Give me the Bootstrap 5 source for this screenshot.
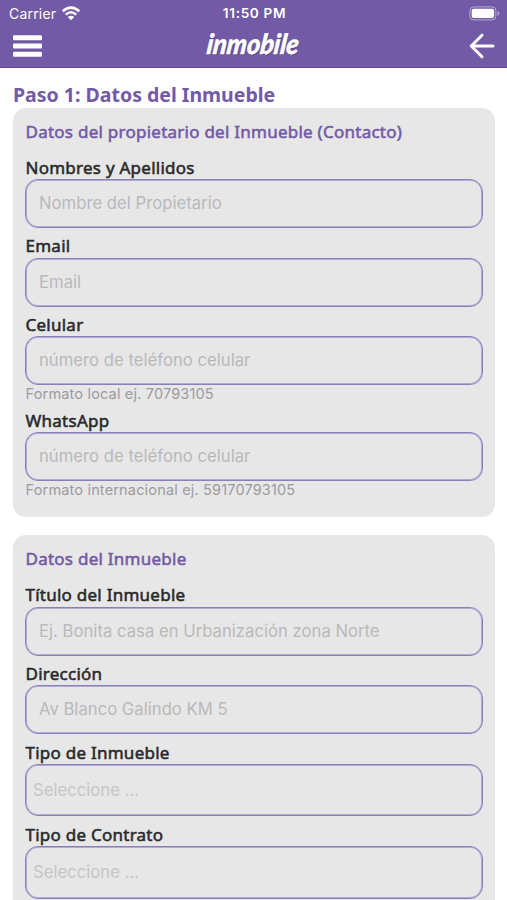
<!DOCTYPE html>
<html lang="es">
<head>
<meta charset="utf-8">
<meta name="viewport" content="width=device-width, initial-scale=1">
<title>Inmobile</title>
<link href="https://cdn.jsdelivr.net/npm/bootstrap@5.3.0/dist/css/bootstrap.min.css" rel="stylesheet">
<style>
:root { --brand: #735aa6; --panel: #e7e7e7; }
html, body { height: 900px; overflow: hidden; }
body { background: #fff; font-family: "Noto Sans", sans-serif; color: #2a2a2a; }
.app-header { height: 68px; background: var(--brand); border-bottom: 1px solid #65499a; }
.status-bar { height: 27px; padding: 0 7px 0 9px; font: 400 14px/27px Inter, sans-serif; }
.status-bar > div { flex: 1 1 0; }
.clock { font-weight: 600; font-size: 13.6px; letter-spacing: .65px; }
.carrier { letter-spacing: .2px; margin-right: 1px; }
.tool-row { height: 38px; padding: 0 12px 0 13px; }
.logo text { font: italic 900 28px Lato, sans-serif; }
.step-title { font-size: 19.5px; font-weight: 700; line-height: 27px; color: var(--brand); padding: 13px 13px 0; margin-bottom: -.5px; }
.panel { background: var(--panel); border-radius: 13px; margin: 0 12.5px 18.5px 13px; padding: 9px 12px 0; }
.panel-first { height: 409px; }
.panel-title, .field-label { font-size: 17px; font-weight: 400; letter-spacing: .25px; -webkit-text-stroke: .55px currentColor; padding-left: .5px; }
.panel-title { line-height: 30px; height: 33px; color: var(--brand); margin: 0; }
.field-label { display: block; line-height: 25px; height: 29.6px; padding-top: 5.4px; white-space: nowrap; }
.field-input.form-control { height: 49px; border: 1px solid #8b7fbb; box-shadow: inset 0 0 0 1px #b3abd0; border-radius: 13px; background: transparent; padding: 0 13px 1px; font: 400 16.7px Inter, sans-serif; }
.field-input.form-control::placeholder { color: #b9b9bb; opacity: 1; }
.field-input.field-pick { height: 52.6px; padding: 0 7px; }
.field-input.field-pick::placeholder { color: #c5c5c8; }
.field-hint { font: 400 14.5px/18px Inter, sans-serif; letter-spacing: .17px; height: 17.5px; color: #9c9c9c; padding-left: .5px; }
</style>
</head>
<body>
<header class="app-header text-white">
  <div class="status-bar d-flex align-items-center">
    <div class="d-flex align-items-center gap-1">
      <span class="carrier">Carrier</span>
      <svg width="20" height="15" viewBox="0 0 20 15" fill="none" stroke="#fff" stroke-width="2.5"><path d="M1.7 5.3Q10-2 18.3 5.3M4.8 8.6Q10 4 15.2 8.6"/><path d="M6.8 11Q10 8.4 13.2 11L10 14.3Z" fill="#fff" stroke="none"/></svg>
    </div>
    <div class="clock text-center">11:50 PM</div>
    <div class="d-flex justify-content-end">
      <svg width="31" height="15" viewBox="0 0 31 15"><rect x=".9" y=".9" width="26" height="13" rx="3.8" fill="none" stroke="#b9add4" stroke-width="1"/><rect x="2.7" y="2.7" width="22.4" height="9.4" rx="2" fill="#fff"/><path d="M28.6 5Q30.3 5.7 30.3 7.4T28.6 9.8Z" fill="#b9add4"/></svg>
    </div>
  </div>
  <div class="tool-row d-flex align-items-center justify-content-between">
    <svg width="29" height="22" viewBox="0 0 29 22" fill="#fff"><rect y=".3" width="29" height="5" rx="1.3"/><rect y="8.5" width="29" height="5" rx="1.3"/><rect y="16.7" width="29" height="5" rx="1.3"/></svg>
    <svg class="logo" width="112" height="38" viewBox="0 0 112 38"><g transform="translate(6 26.5) skewX(-7)"><text x="1" y="1.2" textLength="92" lengthAdjust="spacingAndGlyphs" fill="#4d3a77" opacity=".8">inmobile</text><text textLength="92" lengthAdjust="spacingAndGlyphs" fill="#fff" stroke="#fff" stroke-width=".5">inmobile</text></g></svg>
    <svg width="26" height="26" viewBox="0 0 26 26" fill="none" stroke="#fff" stroke-width="3" stroke-linecap="round" stroke-linejoin="round"><path d="M24 13H2.5M13 2.2L2.2 13L13 23.8"/></svg>
  </div>
</header>
<main>
  <h1 class="step-title">Paso 1: Datos del Inmueble</h1>
  <section class="panel panel-first">
    <h2 class="panel-title">Datos del propietario del Inmueble (Contacto)</h2>
    <label class="field-label" for="nombre">Nombres y Apellidos</label>
    <input id="nombre" class="form-control field-input" placeholder="Nombre del Propietario">
    <label class="field-label" for="email">Email</label>
    <input id="email" class="form-control field-input" placeholder="Email">
    <label class="field-label" for="celular">Celular</label>
    <input id="celular" class="form-control field-input" placeholder="número de teléfono celular">
    <div class="field-hint">Formato local ej. 70793105</div>
    <label class="field-label" for="whatsapp">WhatsApp</label>
    <input id="whatsapp" class="form-control field-input" placeholder="número de teléfono celular">
    <div class="field-hint">Formato internacional ej. 59170793105</div>
  </section>
  <section class="panel">
    <h2 class="panel-title">Datos del Inmueble</h2>
    <label class="field-label" for="titulo">Título del Inmueble</label>
    <input id="titulo" class="form-control field-input" placeholder="Ej. Bonita casa en Urbanización zona Norte">
    <label class="field-label" for="direccion">Dirección</label>
    <input id="direccion" class="form-control field-input" placeholder="Av Blanco Galindo KM 5">
    <label class="field-label" for="tipo">Tipo de Inmueble</label>
    <input id="tipo" class="form-control field-input field-pick" placeholder="Seleccione ..." readonly>
    <label class="field-label" for="contrato">Tipo de Contrato</label>
    <input id="contrato" class="form-control field-input field-pick" placeholder="Seleccione ..." readonly>
    <div class="pb-4"></div>
  </section>
</main>
<script src="https://cdn.jsdelivr.net/npm/bootstrap@5.3.0/dist/js/bootstrap.bundle.min.js"></script>
</body>
</html>
